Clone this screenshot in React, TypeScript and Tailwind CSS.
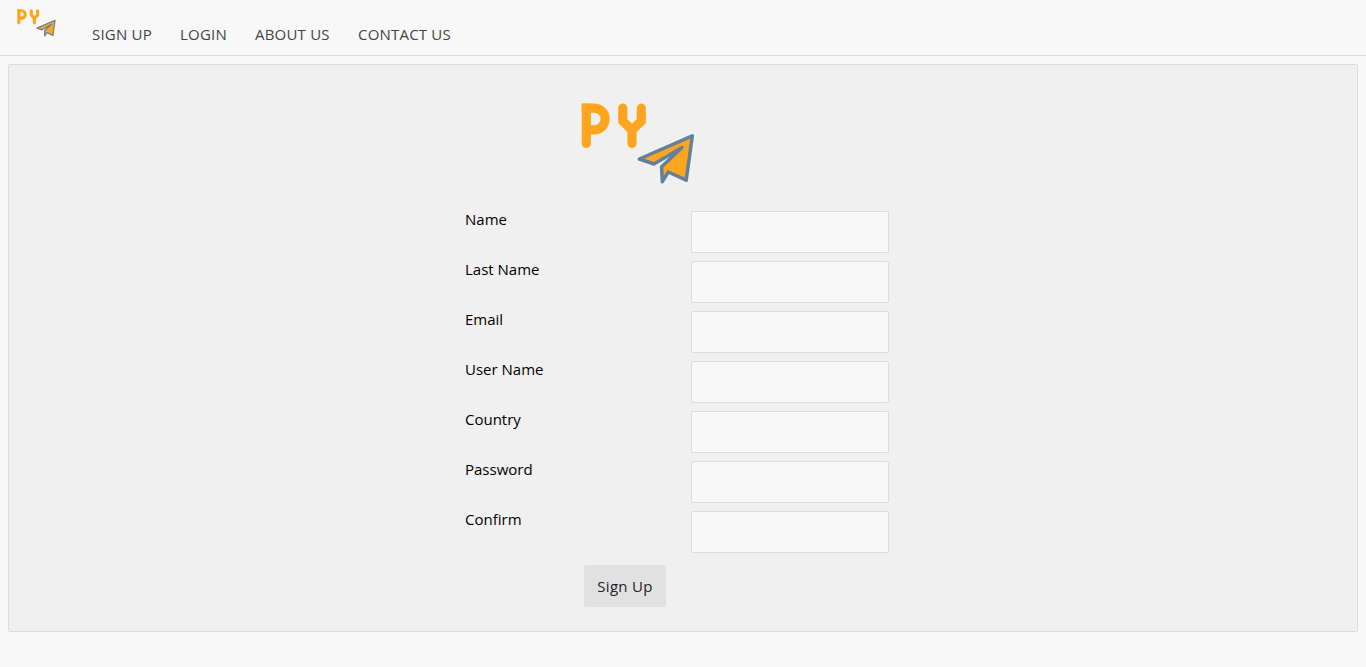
const navItems = [
  { label: 'SIGN UP', width: 'w-[88px]' },
  { label: 'LOGIN', width: 'w-[75px]' },
  { label: 'ABOUT US', width: 'w-[103px]' },
  { label: 'CONTACT US', width: 'w-[110px]' },
];

const fields = ['Name', 'Last Name', 'Email', 'User Name', 'Country', 'Password', 'Confirm'];

function Logo({ className }: { className: string }) {
  return (
    <svg viewBox="11 13 114 82" className={className} fill="none" aria-hidden="true">
      <g stroke="#fda51f" strokeWidth="9.2">
        <path d="M16.3 53.5V18.2H24.3A10.8 10.8 0 0 1 24.3 39.8H16.3" strokeLinecap="round" />
        <path d="M11.7 13.6H20V22H11.7Z" fill="#fda51f" stroke="none" />
        <path d="M52.8 18.2V31L62 40L71.3 31V18.2M62 40V53.5" strokeLinecap="round" />
      </g>
      <path
        d="M69.3 69L122.3 45.9L116.2 90.2L98.3 82L92.3 91.7L91.6 76.7L112 57.5L84 74Z"
        fill="#fda51f"
        stroke="#64809a"
        strokeWidth="3.5"
        strokeLinejoin="round"
      />
    </svg>
  );
}

export default function App() {
  return (
    <div className="min-h-screen bg-[#f8f8f8] font-['Open_Sans','Noto_Sans',sans-serif] text-[15px] leading-5 text-black">
      <header className="flex h-14 border-b border-[#dcdcdc] pl-[17px]">
        <Logo className="mt-[9px] h-7 w-[39px]" />
        <nav className="flex pt-6 pl-9 tracking-[0.2px] text-[#444]">
          {navItems.map((item) => (
            <a key={item.label} href="#" className={`${item.width} whitespace-nowrap`}>
              {item.label}
            </a>
          ))}
        </nav>
      </header>
      <main className="mx-2 mt-2 h-[568px] rounded-xs border border-[#dcdcdc] bg-[#f0f0f0] pt-[38px] pl-[456px]">
        <Logo className="ml-[116px] h-[82px] w-[114px]" />
        <form className="mt-[26px] w-[424px]">
          {fields.map((field) => (
            <label key={field} className="mb-2 flex h-[42px] justify-between">
              <span className="-mt-0.5">{field}</span>
              <input
                type={field === 'Password' || field === 'Confirm' ? 'password' : 'text'}
                className="h-[42px] w-[198px] rounded-xs border border-[#dcdcdc] bg-[#f8f8f8] px-3"
              />
            </label>
          ))}
          <button type="button" className="mt-1 ml-[119px] h-[42px] w-[82px] rounded-xs bg-[#e1e1e1] tracking-[0.3px] text-[#222]">
            Sign Up
          </button>
        </form>
      </main>
    </div>
  );
}
